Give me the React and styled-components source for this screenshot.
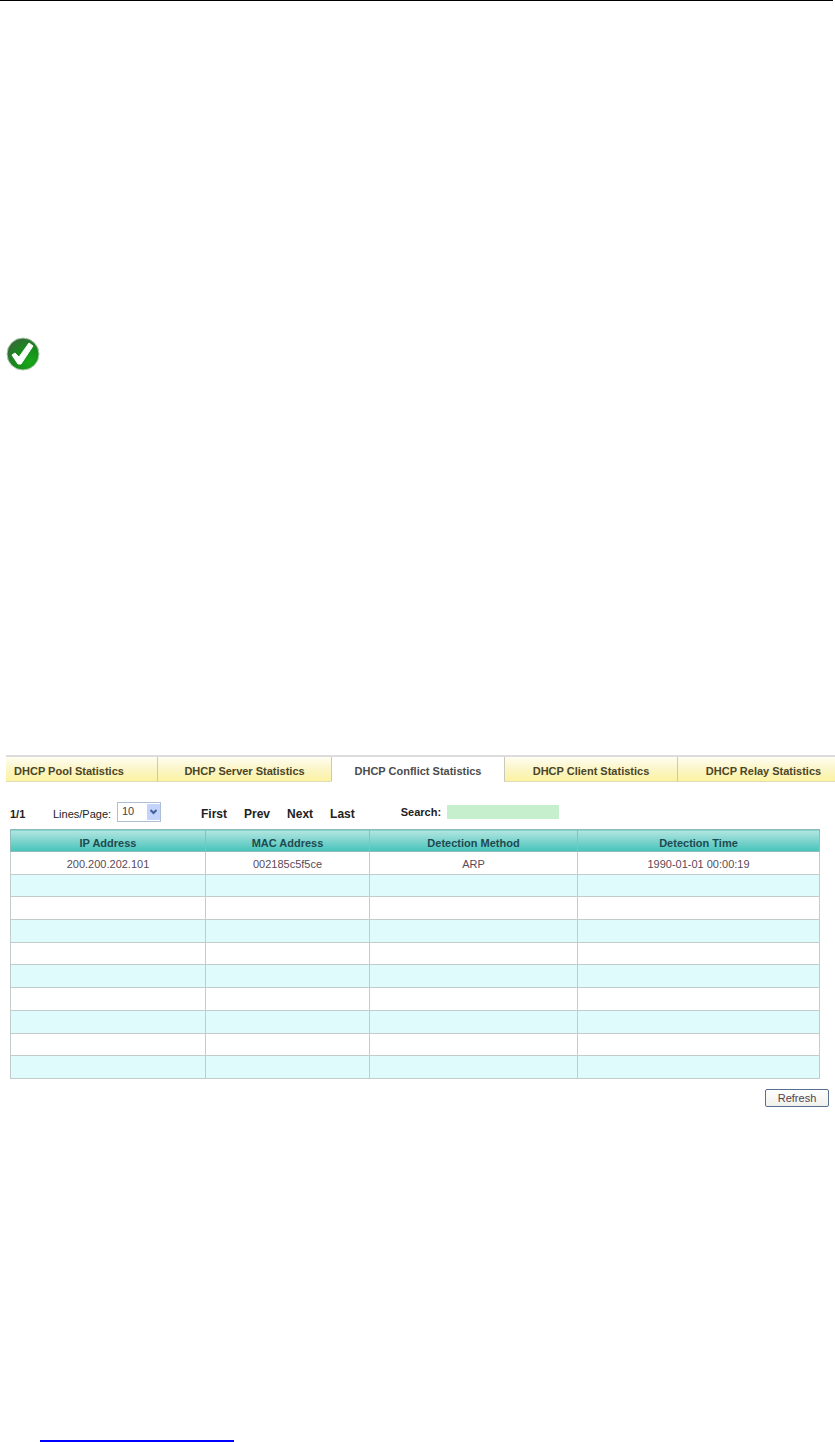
import React, { useState } from 'react'
import styled, { createGlobalStyle } from 'styled-components'

const tabs = [
  'DHCP Pool Statistics',
  'DHCP Server Statistics',
  'DHCP Conflict Statistics',
  'DHCP Client Statistics',
  'DHCP Relay Statistics'
]

const conflicts = [
  ['200.200.202.101', '002185c5f5ce', 'ARP', '1990-01-01 00:00:19']
]

const LINES = 10

function App() {
  const [active, setActive] = useState(2)
  const [search, setSearch] = useState('')

  const rows = Array.from({ length: LINES }, (_, i) => conflicts[i] || ['', '', '', ''])

  return (
    <>
      <GlobalStyle />
      <Page>
        <TopRule />
        <CheckIcon viewBox="0 0 34 34" role="img" aria-label="Done">
          <defs>
            <radialGradient id="ball" cx="0.7" cy="0.75" r="0.8">
              <stop offset="0" stopColor="#18a818" />
              <stop offset="0.55" stopColor="#188a1c" />
              <stop offset="1" stopColor="#356b38" />
            </radialGradient>
          </defs>
          <circle cx="17" cy="17" r="16" fill="url(#ball)" stroke="#a9c9a9" strokeWidth="1" />
          <path d="M6 18 L9 16 L13 20 L23 6 L27 9 L15 27 L12 27 Z" fill="#fff" stroke="#fff" strokeWidth="1" strokeLinejoin="round" />
        </CheckIcon>

        <Panel>
          <Tabs>
            {tabs.map((tab, i) => (
              <Tab key={tab} type="button" $active={i === active} onClick={() => setActive(i)}>
                {tab}
              </Tab>
            ))}
          </Tabs>

          <Toolbar>
            <PageCount>1/1</PageCount>
            <LinesLabel htmlFor="lines">Lines/Page:</LinesLabel>
            <SelectBox>
              <LinesSelect id="lines" defaultValue="10">
                <option>10</option>
                <option>20</option>
                <option>50</option>
              </LinesSelect>
              <SelectArrow viewBox="0 0 13 16" aria-hidden="true">
                <rect width="13" height="16" rx="1" fill="#c3d3fb" />
                <path d="M3.500 6 L6.500 9 L9.500 6" fill="none" stroke="#42609c" strokeWidth="2" />
              </SelectArrow>
            </SelectBox>
            <Pager>
              <PagerLink href="#first">First</PagerLink>
              <PagerLink href="#prev">Prev</PagerLink>
              <PagerLink href="#next">Next</PagerLink>
              <PagerLink href="#last">Last</PagerLink>
            </Pager>
            <SearchField>
              <label htmlFor="search">Search:</label>
              <SearchInput id="search" value={search} onChange={e => setSearch(e.target.value)} />
            </SearchField>
          </Toolbar>

          <Table>
            <colgroup>
              <Col $share={195} />
              <Col $share={164} />
              <Col $share={208} />
              <Col $share={242} />
            </colgroup>
            <thead>
              <tr>
                <th>IP Address</th>
                <th>MAC Address</th>
                <th>Detection Method</th>
                <th>Detection Time</th>
              </tr>
            </thead>
            <tbody>
              {rows.map((row, i) => (
                <tr key={i}>
                  {row.map((cell, j) => <td key={j}>{cell}</td>)}
                </tr>
              ))}
            </tbody>
          </Table>

          <Actions>
            <RefreshButton type="button">Refresh</RefreshButton>
          </Actions>
        </Panel>

        <FooterLink href="#top" aria-label="Top" />
      </Page>
    </>
  )
}

export default App

const GlobalStyle = createGlobalStyle`
  * {
    box-sizing: border-box;
  }
  body {
    margin: 0;
    background: #fff;
    color: #222;
    font-family: "Liberation Sans", Arial, sans-serif;
    font-size: 11px;
  }
  button, input, select {
    font-family: inherit;
    font-size: inherit;
  }
`;

const Page = styled.main`
  display: flex;
  flex-direction: column;
`;

const TopRule = styled.hr`
  align-self: stretch;
  margin: 0 2px 0 0;
  border: 0;
  border-top: 1px solid #000;
`;

const CheckIcon = styled.svg`
  width: 34px;
  height: 34px;
  margin: 336px 0 0 6px;
`;

const Panel = styled.section`
  margin: 384px 0 0 6px;
`;

const Tabs = styled.nav`
  display: grid;
  grid-template-columns: 151fr 174fr 173fr 173fr 158fr;
  border-top: 2px solid #dcdcdc;
`;

const Tab = styled.button`
  height: 25px;
  padding: 4px 0 0;
  border: 0;
  border-left: 1px solid #c9c9b8;
  border-bottom: 1px solid ${props => (props.$active ? '#fff' : '#dfdcb8')};
  background: ${props => (props.$active ? '#fff' : 'linear-gradient(#fffef2, #fbf5c8 50%, #fcf3a2)')};
  color: ${props => (props.$active ? '#4c4c4c' : '#4b4526')};
  font-weight: bold;
  text-align: center;
  white-space: nowrap;
  cursor: pointer;

  &:first-child {
    padding-right: 25px;
    border-left: 0;
  }

  &:last-child {
    padding-left: 14px;
  }
`;

const Toolbar = styled.div`
  display: flex;
  align-items: center;
  height: 20px;
  margin: 20px 0 7px 4px;
`;

const PageCount = styled.span`
  width: 43px;
  padding-top: 4px;
  font-weight: bold;
`;

const LinesLabel = styled.label`
  width: 64px;
  padding-top: 4px;
  white-space: nowrap;
`;

const SelectBox = styled.div`
  position: relative;
  width: 44px;
  height: 20px;
`;

const LinesSelect = styled.select`
  appearance: none;
  display: block;
  width: 100%;
  height: 100%;
  padding: 0 0 2px 4px;
  border: 1px solid #aebfd4;
  border-radius: 0;
  background: #fff;
  color: #444;
`;

const SelectArrow = styled.svg`
  position: absolute;
  top: 2px;
  right: 1px;
  width: 13px;
  height: 16px;
  pointer-events: none;
`;

const Pager = styled.nav`
  display: flex;
  gap: 17px;
  margin: 4px 0 0 40px;
`;

const PagerLink = styled.a`
  color: #222;
  font-weight: bold;
  font-size: 12px;
  text-decoration: none;
`;

const SearchField = styled.div`
  display: flex;
  align-items: center;
  gap: 6px;
  margin-left: 46px;
  font-weight: bold;
`;

const SearchInput = styled.input`
  width: 112px;
  height: 14px;
  padding: 0 2px;
  border: 0;
  background: #c6efce;
`;

const Table = styled.table`
  width: calc(100% - 19px);
  height: 250px;
  margin-left: 4px;
  border-collapse: collapse;
  table-layout: fixed;
  text-align: center;

  tr {
    height: 22px;
  }

  th, td {
    padding: 2px 0 0;
    border: 1px solid #c3cccc;
  }

  th {
    padding-top: 4px;
    border-color: #8fbcb8;
    background: linear-gradient(#b4e6e1, #7cd4cd 50%, #45c4bb);
    color: #1f4a50;
  }

  td {
    color: #5a4a58;
  }

  tbody tr:nth-child(even) {
    background: #dffbfc;
  }
`;

const Col = styled.col`
  width: calc(100% * ${props => props.$share} / 809);
`;

const Actions = styled.div`
  display: flex;
  justify-content: flex-end;
  margin: 10px 6px 0 0;
`;

const RefreshButton = styled.button`
  width: 64px;
  height: 18px;
  padding: 0;
  border: 1px solid #587090;
  border-radius: 2px;
  background: linear-gradient(#fff, #f0f0ec);
  color: #54404c;
  font-size: 11px;
  line-height: 16px;
  cursor: pointer;
`;

const FooterLink = styled.a`
  width: 194px;
  height: 20px;
  margin: 315px 0 0 40px;
  border-bottom: 2px solid #00f;
`;
